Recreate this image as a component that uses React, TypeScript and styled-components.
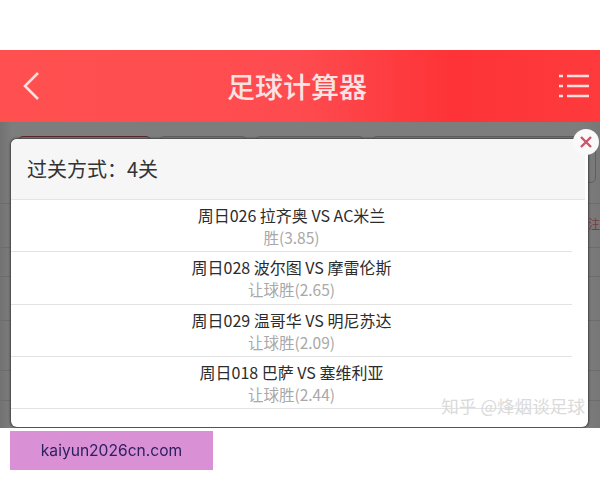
import React from "react";
import styled, { createGlobalStyle } from "styled-components";

const Global = createGlobalStyle`
  html, body { margin: 0; padding: 0; background: #fff; }
  body { font-family: "Liberation Sans", "Noto Sans CJK SC", sans-serif; }
`;
const Page = styled.div`
  width: 600px;
  height: 480px;
  padding-top: 50px;
  box-sizing: border-box;
  overflow: hidden;
  filter: blur(0.35px);
`;
const Screen = styled.div`
  height: 378px;
  display: flex;
  flex-direction: column;
`;
const Header = styled.header`
  height: 72px;
  flex: none;
  display: flex;
  align-items: center;
  justify-content: space-between;
  padding: 0 10px 0 22px;
  background: linear-gradient(90deg, #ff5050 0%, #fe4b4f 50%, #fd3337 75%, #fe3a3c 100%);
`;
const Title = styled.h1`
  margin: 0 7px 0 0;
  font: 500 28px/32px "Noto Sans CJK SC", sans-serif;
  color: #fbe3e3;
`;
const Dim = styled.div`
  position: relative;
  flex: 1;
  background: linear-gradient(90deg, #727272 0%, #7d7d7d 2%, #7d7d7d 97%, #777 100%);
  padding: 14px 0 0 18px;
  overflow: hidden;
`;
const Tabs = styled.div`
  display: flex;
  gap: 8px;
`;
const Tab = styled.div<{ $w: number; $active?: boolean }>`
  width: ${(p) => p.$w}px;
  height: 47px;
  box-sizing: border-box;
  border: 1px solid ${(p) => (p.$active ? "#5a2228" : "#5f5f5f")};
  border-radius: 5px;
`;
const BackRows = styled.div`
  margin: 0 0 0 -18px;
`;
const BackRow = styled.div<{ $h: number }>`
  height: ${(p) => p.$h}px;
  box-sizing: border-box;
  border-bottom: 1px solid #6c6c6c;
`;
const SideText = styled.span`
  position: absolute;
  top: 93px;
  right: 0;
  font: 12px "Noto Sans CJK SC", sans-serif;
  color: #7a3c48;
`;
const Modal = styled.section`
  position: absolute;
  left: 11px;
  top: 17px;
  width: 577px;
  height: 288px;
  background: #fff;
  border-radius: 6px;
  box-shadow: 0 0 2px 1px #454545;
`;
const ModalHead = styled.div`
  height: 60px;
  margin-right: 3px;
  padding: 0 0 0 16px;
  display: flex;
  align-items: center;
  background: #f6f6f6;
  border-bottom: 1px solid #e5e5e5;
  border-radius: 6px 6px 0 0;
  font: 400 20px/28px "Noto Sans CJK SC", sans-serif;
  color: #333;
`;
const Bet = styled.div`
  width: 561px;
  height: 52.3px;
  box-sizing: border-box;
  padding-top: 4px;
  border-bottom: 1px solid #e3e3e3;
  text-align: center;
`;
const Match = styled.div`
  font: 400 16px/22px "Noto Sans CJK SC", sans-serif;
  color: #2c2c2c;
`;
const Odds = styled.div`
  font: 400 15.5px/22px "Noto Sans CJK SC", sans-serif;
  color: #a8a8a8;
`;
const Close = styled.button`
  position: absolute;
  right: -11px;
  top: -10px;
  width: 26px;
  height: 26px;
  padding: 0;
  border: 0;
  border-radius: 50%;
  background: #f9f9f9;
  display: flex;
  align-items: center;
  justify-content: center;
`;
const Watermark = styled.span`
  position: absolute;
  right: 3px;
  bottom: 10px;
  font: 400 17.6px/22px "Noto Sans CJK SC", sans-serif;
  color: #dadada;
  white-space: nowrap;
`;
const Ad = styled.div`
  width: 203px;
  height: 39px;
  margin: 3px 0 0 10px;
  background: #da90d4;
  display: flex;
  align-items: center;
  justify-content: center;
  font: 400 15.6px/20px "Inter", sans-serif;
  color: #2d2060;
`;

const tabs = [133, 88, 109, 224];
const rows = [21, 44, 29, 44, 50, 30];
const bets = [
  ["周日026 拉齐奥 VS AC米兰", "胜(3.85)"],
  ["周日028 波尔图 VS 摩雷伦斯", "让球胜(2.65)"],
  ["周日029 温哥华 VS 明尼苏达", "让球胜(2.09)"],
  ["周日018 巴萨 VS 塞维利亚", "让球胜(2.44)"],
];

export default function App() {
  return (
    <Page>
      <Global />
      <Screen>
        <Header>
          <svg width="20" height="30" viewBox="0 0 20 30" fill="none" stroke="#fbdede" strokeWidth="2.6">
            <path d="M16 2 L3 15 L16 28" />
          </svg>
          <Title>足球计算器</Title>
          <svg width="31" height="24" viewBox="0 0 31 24" fill="none" stroke="#fbdede" strokeWidth="2.6">
            <path d="M0 2h4M8 2h22M0 12h4M8 12h22M0 22h4M8 22h22" />
          </svg>
        </Header>
        <Dim>
          <Tabs>
            {tabs.map((w, i) => (
              <Tab key={w} $w={w} $active={i === 0} />
            ))}
          </Tabs>
          <BackRows>
            {rows.map((h, i) => (
              <BackRow key={i} $h={h} />
            ))}
          </BackRows>
          <SideText>注</SideText>
          <Modal>
            <ModalHead>过关方式：4关</ModalHead>
            {bets.map(([m, o]) => (
              <Bet key={m}>
                <Match>{m}</Match>
                <Odds>{o}</Odds>
              </Bet>
            ))}
            <Watermark>知乎 @烽烟谈足球</Watermark>
            <Close aria-label="关闭">
              <svg width="12" height="12" viewBox="0 0 12 12" stroke="#c9556a" strokeWidth="2.4">
                <path d="M1 1 L11 11 M11 1 L1 11" />
              </svg>
            </Close>
          </Modal>
        </Dim>
      </Screen>
      <Ad>kaiyun2026cn.com</Ad>
    </Page>
  );
}
